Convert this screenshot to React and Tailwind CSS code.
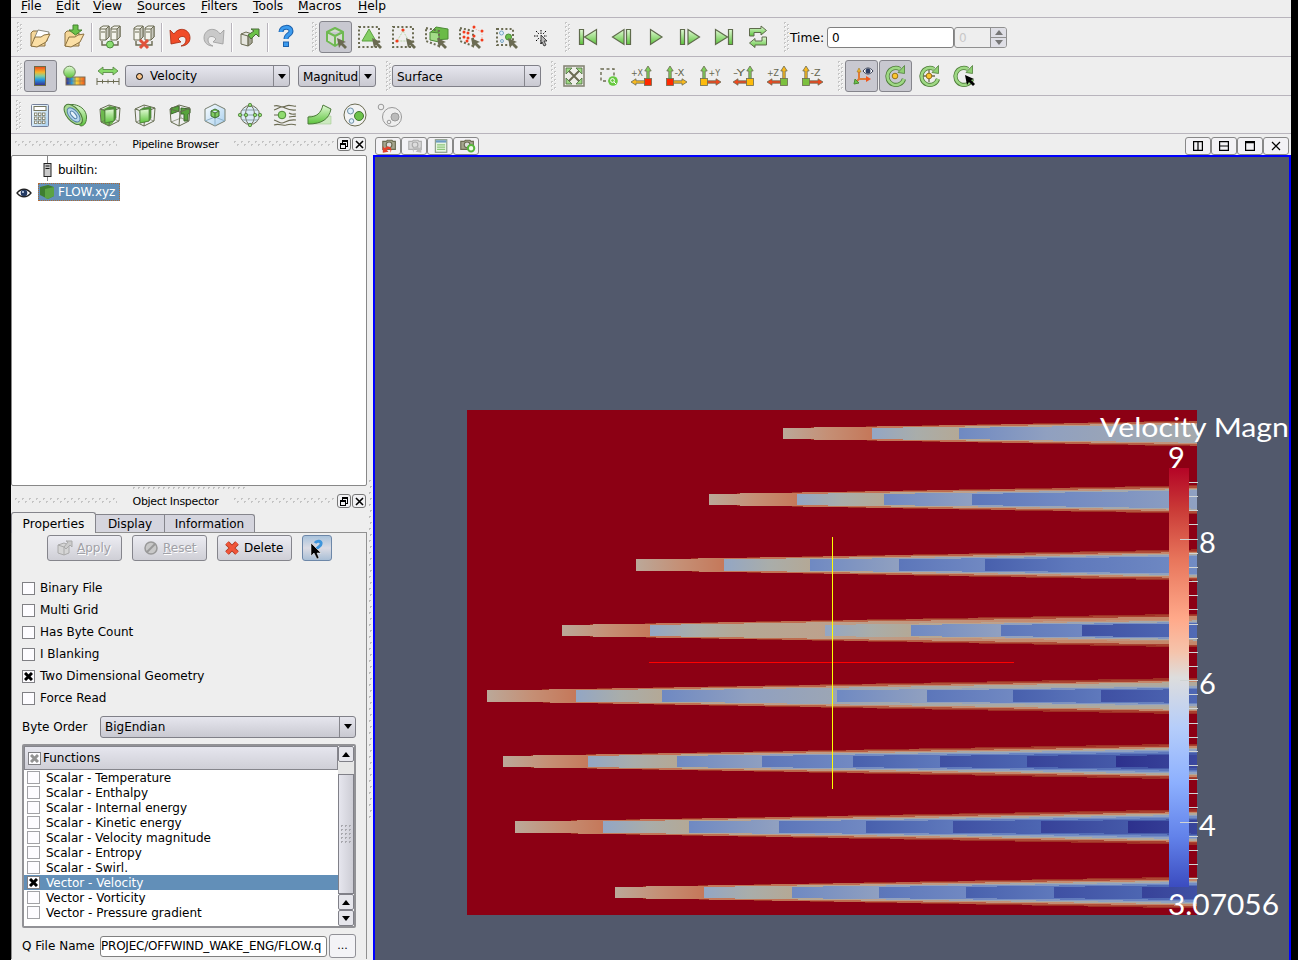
import React from "react";

const O = "#6b6b52";
const G = "#6cc24a";

/* ---------- generic pieces ---------- */

const I = ({ children, s = 30 }) => (
  <svg width={s} height={s} viewBox={`${-s / 2} ${-s / 2} ${s} ${s}`} className="block shrink-0 overflow-visible" fill="none">
    {children}
  </svg>
);

const Cell = ({ children, on, wide }) => (
  <div className={`flex h-8 shrink-0 items-center justify-center ${wide ? "w-[35px]" : "w-[34px]"}`}>
    {on ? (
      <div className="flex h-8 w-[33px] items-center justify-center rounded-[3px] border border-[#85858c] bg-[#c8c8d0]">{children}</div>
    ) : (
      children
    )}
  </div>
);

const Sep = () => <div className="h-[29px] w-[2px] shrink-0 border-l border-[#b8b4bc] bg-white" />;

const Grip = ({ w }) => (
  <div className={`flex shrink-0 justify-end ${w}`}>
    <svg width="6" height="30" shapeRendering="crispEdges">
      {Array.from({ length: 8 }, (_, i) => (
        <g key={i}>
          <path d={`M0 ${i * 4}h2v1h-1v1h-1z`} fill="#c6c6c6" />
          <path d={`M1 ${i * 4 + 1}h1v1h-1z`} fill="#fff" />
          {i < 7 && <path d={`M3 ${i * 4 + 2}h2v1h-1v1h-1z`} fill="#c6c6c6" />}
          {i < 7 && <path d={`M4 ${i * 4 + 3}h1v1h-1z`} fill="#fff" />}
        </g>
      ))}
    </svg>
  </div>
);

const Dots = ({ w }) => (
  <svg width={w} height="6" shapeRendering="crispEdges" className="block shrink-0">
    {Array.from({ length: Math.floor(w / 7) + 1 }, (_, i) => (
      <g key={i} fill="#c4c4c4">
        <path d={`M${i * 7} 0h2v1h-1v1h-1z`} />
        <path d={`M${i * 7 + 3} 3h2v1h-1v1h-1z`} />
      </g>
    ))}
  </svg>
);

const DotRow = ({ w }) => (
  <svg width={w} height="3" shapeRendering="crispEdges" className="block shrink-0">
    {Array.from({ length: Math.floor(w / 5) + 1 }, (_, i) => (
      <path key={i} d={`M${i * 5} 0h2v1h-1v1h-1z`} fill="#c0c0c0" />
    ))}
  </svg>
);

const Arrow = ({ up, c = "#000" }) => (
  <svg width="8" height="5" className="block shrink-0">
    <path d={up ? "M0 5h8l-4-5z" : "M0 0h8l-4 5z"} fill={c} />
  </svg>
);

const Combo = ({ w, children }) => (
  <div className={`flex h-[22px] shrink-0 overflow-hidden rounded-[3px] border border-[#808088] bg-gradient-to-b from-[#e6e6ee] to-[#c9c9d1] ${w}`}>
    <div className="flex min-w-0 flex-1 items-center overflow-hidden whitespace-nowrap pl-1">{children}</div>
    <div className="flex w-4 shrink-0 items-center justify-center border-l border-[#85858c]">
      <Arrow />
    </div>
  </div>
);

/* ---------- toolbar icons ---------- */

const Folder = ({ arrow }) => (
  <I>
    <path d="M-9 9V-4l2-2h5l2 2h5V9z" fill="#f5d79a" stroke="#8b7140" />
    {!arrow && <path d="M-6 2l4-9 11 2-2 9z" fill="#fff" stroke="#8c8c80" />}
    <path d="M-9 9l4-9 6 0 3-2 6-1-4 8-9 5z" fill="#fbdfa5" stroke="#8b7140" />
    {arrow && <path d="M-1-12h5v5h4L1.500-2-5-7h4z" fill={G} stroke="#43822e" />}
  </I>
);

const Servers = ({ bad }) => (
  <I>
    {[-10, 1].map((x) => (
      <g key={x} stroke={O}>
        <path d={`M${x}-9l3-2h6v11l-3 3h-6z`} fill="#f4f4ec" />
        <path d={`M${x + 6} 3v-11l3-3v11z`} fill="#c7c7bc" />
        <path d={`M${x}-8h6M${x + 1}-5h4`} />
      </g>
    ))}
    <path d="M-8 4v4H8V4" stroke={O} strokeWidth="1.400" />
    {bad ? (
      <path d="M-4 3L4 11M4 3l-8 8" stroke="#e0533c" strokeWidth="3" />
    ) : (
      <circle cy="7.500" r="3.500" fill="#8ade72" stroke="#4a8a38" />
    )}
  </I>
);

const Undo = ({ gray }) => (
  <I>
    <g transform={gray ? "scale(-1,1)" : ""}>
      <path
        d="M-10-7l1 14 10-2-3-3c3-4 8-3 8 1 0 3-2 5-5 6 6 0 9-4 9-8C10-8-1-11-6-3z"
        fill={gray ? "#c9c9c9" : "#f04c28"}
        stroke={gray ? "#9a9a9a" : "#a4290f"}
        strokeWidth=".8"
      />
    </g>
  </I>
);

const Export = () => (
  <I>
    <path d="M-9-3l5-2 6 2v9l-4 3-7-2z" fill="#e6e6df" stroke={O} />
    <path d="M-2-1l4-2v9l-4 3z" fill="#a5a596" stroke={O} strokeWidth=".7" />
    <path d="M-9-3l7 2v10" stroke={O} />
    <path d="M-2-2l6-4-3-2h8v8l-3-3-5 5z" fill={G} stroke="#4a6b38" />
  </I>
);

const Question = () => (
  <I>
    <path d="M-5-5c0-6 10-6 10-1 0 4-5 3-5 8" stroke="#1d62ad" strokeWidth="5" />
    <path d="M-5-5c0-6 10-6 10-1 0 4-5 3-5 8" stroke="#3c9bee" strokeWidth="3" />
    <rect x="-2.500" y="5" width="5" height="4.500" fill="#3c9bee" stroke="#1d62ad" />
  </I>
);

const Ptr = ({ x = 0, y = 0, c = O }) => (
  <path transform={`translate(${x} ${y})`} d="M0 0l9 4-3 1 4 4-2 2-4-4-2 3z" fill={c} />
);
const DashBox = ({ s = 10 }) => <rect x={-s} y={-s} width={s * 2} height={s * 2} stroke={O} strokeWidth="2" strokeDasharray="2 2.200" />;

const SelCube = () => (
  <I>
    <path d="M-8-5l8-4 8 4v9l-8 5-8-5zM-8-5l8 4 8-4M0-1v10" fill="#d3dccf" stroke="#6fb952" strokeWidth="2" strokeLinejoin="round" />
    <Ptr x={2} y={1} />
  </I>
);
const SelTri = ({ pts }) => (
  <I>
    <DashBox />
    {pts ? (
      <>
        <path d="M0-6L-6 4H6z" stroke="#b9d6a8" strokeDasharray="2 1" />
        <g fill="#f23c1c">
          <circle cx="0" cy="-7" r="1.600" />
          <circle cx="-6" cy="4" r="1.600" />
          <circle cx="6" cy="4" r="1.600" />
        </g>
      </>
    ) : (
      <path d="M0-8L-7 4H7z" fill="#85cf66" stroke="#5ba03f" />
    )}
    <Ptr x={3} y={1} />
  </I>
);
const SelFrus = () => (
  <I>
    <path d="M-6-5l5-5 12 2 0 10-13 1z" fill="#6abb47" stroke="#4c8a35" />
    <path d="M-7-5l9 1v9l-9-2z" fill="#a4dc88" stroke="#4c8a35" />
    <path d="M-11-9L2-6V9l-13-5z" stroke={O} strokeWidth="2" strokeDasharray="2 2" />
    <Ptr x={0} y={1} />
  </I>
);
const SelFrusP = () => (
  <I>
    <path d="M-11-9L2-6V9l-13-5z" stroke={O} strokeWidth="2" strokeDasharray="2 2" />
    <path d="M2-9l9 4v9" stroke="#f7a090" strokeDasharray="1 2" />
    <g fill="#f23c1c">
      {[[-7, -5], [-3, -4], [-7, 0], [-3, 1], [3, -10], [11, -6], [11, 3], [3, -1], [-4, 4]].map(([x, y], i) => (
        <circle key={i} cx={x} cy={y} r="1.500" />
      ))}
    </g>
    <Ptr x={0} y={1} />
  </I>
);
const SelBlock = () => (
  <I>
    <DashBox s={8} />
    <circle cx="-3.500" cy="-4" r="2" fill="#dff0fb" stroke="#7aa6c4" />
    <circle cx="-3" cy="4" r="1.500" fill="#dff0fb" stroke="#7aa6c4" />
    <circle cx="3.500" cy="0" r="3" fill={G} stroke="#4c8a35" />
    <Ptr x={3} y={1} />
  </I>
);
const Magic = () => (
  <I>
    <g transform="translate(2 0)">
      <path d="M0-7v4M0 3v4M-7-1h4M3-1h3M-5-6l3 3M5-6L2-3M-5 4l3-3" stroke="#000" strokeDasharray="1.500 1" />
      <path d="M0-2l6 6-3 0 2 4-2 1-2-4-1 2z" fill="#b9b9b9" stroke="#222" strokeWidth=".8" />
    </g>
  </I>
);

const Grad = () => (
  <svg width="0" height="0" className="absolute">
    <defs>
      <linearGradient id="gr" x2="0" y2="1">
        <stop stopColor="#e2fad6" />
        <stop offset="1" stopColor="#5cc33b" />
      </linearGradient>
      <linearGradient id="jet" x2="0" y2="1">
        <stop stopColor="#e8461c" />
        <stop offset=".3" stopColor="#f7b52a" />
        <stop offset=".5" stopColor="#7fd0a0" />
        <stop offset=".7" stopColor="#2596e0" />
        <stop offset="1" stopColor="#3b2a86" />
      </linearGradient>
      <linearGradient id="jeth">
        <stop stopColor="#3b2a86" />
        <stop offset=".3" stopColor="#2596e0" />
        <stop offset=".55" stopColor="#f7d23a" />
        <stop offset="1" stopColor="#f0561c" />
      </linearGradient>
      <linearGradient id="bl" x2="1" y2="1">
        <stop stopColor="#fafdff" />
        <stop offset="1" stopColor="#a9d0ee" />
      </linearGradient>
    </defs>
  </svg>
);

const P = ({ d }) => (
  <I>
    <path d={d} fill="url(#gr)" stroke="#5f6b4c" strokeWidth="1.200" />
  </I>
);
const Loop = () => (
  <I>
    <path d="M-8.500-1v-7.500H3v-2.500l5.500 4.500L3-2v-2.500h-7V-1z" fill="url(#gr)" stroke="#5f6b4c" />
    <path d="M8.500 0v8H-3v2.500L-8.500 6-3 1.500V4h7V0z" fill="url(#gr)" stroke="#5f6b4c" />
  </I>
);

const ColorMap = () => (
  <I>
    <rect x="-5.500" y="-9.500" width="11" height="19" fill="url(#jet)" stroke="#6c6c48" />
  </I>
);
const ColorEdit = () => (
  <I>
    <rect x="-8" y="1" width="19" height="8" fill="url(#jeth)" stroke="#7d7055" />
    <path d="M-4 1v8M1 1v8M6 1v8M-8 5H11" stroke="#7d7055" strokeWidth=".5" />
    <circle cx="-4.500" cy="-4" r="5.800" fill="url(#gr)" stroke="#6d8a5c" />
  </I>
);
const Rescale = () => (
  <I>
    <path d="M-10-5l5-4v2.500H5V-9l5 4-5 4v-2.500H-5V-1z" fill="#86d968" stroke="#5b8a48" strokeWidth=".9" />
    <path d="M-11 2v7M11 2v7M-11 5.500H11M-5.500 3.500v4M0 3.500v4M5.500 3.500v4" stroke={O} />
  </I>
);
const Fit = () => (
  <I>
    <rect x="-10" y="-10" width="20" height="20" fill="#eeeee9" stroke="#858575" strokeWidth="1.600" />
    <path d="M-7-7L7 7M7-7L-7 7" stroke={O} strokeWidth="2" />
    <path d="M-8-8h6l-6 6zM8-8v6l-6-6zM-8 8V2l6 6zM8 8H2l6-6z" fill="#9edb84" stroke="#4b6b3c" strokeWidth=".8" />
  </I>
);
const ZoomBox = () => (
  <I>
    <rect x="-7" y="-7" width="13" height="12" stroke={O} strokeWidth="1.400" strokeDasharray="3 2.500" />
    <circle cx="5" cy="5" r="4.800" fill="#66c93f" />
    <circle cx="4.500" cy="4.500" r="1.900" stroke="#fff" />
    <path d="M6 6l2 2" stroke="#fff" />
  </I>
);

const Axis = ({ t, left, up, side, box }) => {
  const f = left ? -1 : 1;
  return (
    <I>
      <g transform={`translate(${left ? 6 : -6} 6) scale(${f} 1)`} stroke={O} strokeWidth=".8">
        <path d="M-1.200 0v-11h-2L0-16l3.200 5h-2V0z" fill={up} />
        <path d="M0-1.200h12v-2L17 0l-5 3.200v-2H0z" fill={side} />
        <rect x="-3.500" y="-3.500" width="7" height="7" fill={box} />
      </g>
      <text x={left ? -11 : -1.5} y="-.5" fontSize="9" fontFamily="DejaVu Sans, sans-serif" fill="#66664f" textLength={left ? 12 : t[0] === "+" ? 11.5 : 10} lengthAdjust="spacingAndGlyphs">
        {t}
      </text>
    </I>
  );
};

const AxesEye = () => (
  <I>
    <path d="M-2 3V-5M-2 3H7M-2 3l-3 3" stroke="#df7a35" strokeWidth="2" />
    <path d="M-4-4l2-4 2 4z" fill="#f7b52a" stroke="#a07a20" strokeWidth=".6" />
    <path d="M5 0l5 3-5 3z" fill="#f0561c" />
    <path d="M-7 8l1-5 4 4z" fill={G} stroke="#4c8a35" />
    <path d="M2-5c3-4 7-4 10 0-3 4-7 4-10 0z" fill="#fff" stroke="#333b50" />
    <circle cx="7" cy="-5" r="2.500" fill="#2c3c60" />
  </I>
);
const Rot = ({ mid, cur }) => (
  <I>
    <path d="M5-7A8.500 8.500 0 1 0 9 3" stroke="#4f7d3a" strokeWidth="4.200" />
    <path d="M5-7A8.500 8.500 0 1 0 9 3" stroke="#9ed884" strokeWidth="2.600" />
    <path d="M3-3.500L9.500-10.500V-2.500z" fill="#8fd072" stroke="#4f7d3a" strokeWidth=".8" />
    {mid === 2 && <path d="M0-6V6M-6 0H6" stroke={O} strokeWidth="1.300" />}
    {mid && <circle r="2.800" fill="#fbc52f" stroke="#96731a" />}
    {cur && <Ptr x={2} y={-1} c="#000" />}
  </I>
);

const Calc = () => (
  <I>
    <rect x="-8.500" y="-10.500" width="17" height="22" rx="1" fill="url(#bl)" stroke="#74809a" />
    <rect x="-6" y="-8.500" width="12" height="4" fill="#fff" stroke="#77775f" />
    {[-5, -1, 3].map((x) =>
      [-2, 2, 6].map((y) => <rect key={`${x}${y}`} x={x - 0.5} y={y} width="2.500" height="2.500" fill="#fff" stroke="#77775f" strokeWidth=".8" />)
    )}
  </I>
);
const Contour = () => (
  <I>
    <path d="M-10-8C-7-13 11-11 11.500 2c0 7-3 9-6 9z" fill="url(#gr)" stroke="#4c7a3a" />
    <ellipse cx="-1.500" cy="1" transform="rotate(50)" rx="12" ry="6.500" fill="#a9d993" stroke="#4c7a3a" />
    <ellipse cx="-1" cy="1" transform="rotate(50)" rx="8.500" ry="4.500" fill="#b5d6ee" stroke="#5480a8" />
    <ellipse cx="-1" cy="1" transform="rotate(50)" rx="4.500" ry="2" fill="#e6f3fb" stroke="#5480a8" />
  </I>
);
const Cube = ({ v }) => (
  <I>
    {v === 0 && <path d="M-9-5L0-9l5 1-2 16-4 3-8-4z" fill="#6db94e" />}
    {v === 2 && <path d="M-9-7l8-2v5l-8 3zM1-7l9 1v4l-2 1v7H4V-1H1z" fill="#57a33c" stroke="#3d6b2c" />}
    <path d="M-10-6L-1-10 10-7 9 6-1 11-9 7zM-10-6L0-3 10-7M0-3l-1 14" stroke="#646c50" />
    <path d="M-9 7L1 3 9 6M1 3L-1-10" stroke="#646c50" strokeWidth=".6" />
    {v < 2 && <path d="M-5-5l3-2 8-1v11l-2 3-9 2z" fill="#4f9a38" stroke="#4c7a3a" strokeWidth=".7" />}
    {v < 2 && <path d="M-5-5l9-1v12l-9 2z" fill="url(#gr)" stroke="#4c7a3a" strokeWidth=".7" />}
  </I>
);
const Subset = () => (
  <I>
    <path d="M-10-6L0-11 10-6V6L0 11-10 6z" fill="url(#bl)" stroke="#777f70" />
    <path d="M-10 6L0 2 10 6M0 2v9" stroke="#8fb3cc" />
    <path d="M-4-4l4-2 4 2v5l-4 2-4-2zM-4-4l4 2 4-2M0-2v5" fill="#7fcc60" stroke="#3f6f30" />
  </I>
);
const Glyph = () => (
  <I>
    <circle r="9.500" fill="#dcecf8" stroke={O} />
    <ellipse rx="4.500" ry="9.500" stroke={O} />
    <path d="M-9.500 0H9.500M-8-5H8M-8 5H8" stroke="#8fa0a8" />
    {[[0, -10], [0, 10], [-10, 0], [10, 0], [-4, 0], [5, 0]].map(([x, y], i) => (
      <circle key={i} cx={x} cy={y} r="1.700" fill="#8fdb70" stroke="#4c7a3a" strokeWidth=".8" />
    ))}
  </I>
);
const Stream = () => (
  <I>
    <path d="M-11-9c5-2 7 3 12 0 4-2 7 1 10 0M-11-5c4-1 5-3 8-3s5 4 14 3M-11 5c4 1 5 3 8 3s5-4 14-3M-11 10c5-2 7 1 12 0 4-1 7-1 10 0M-11 0h5M4-2c3 2 4 1 7 1M4 2c3-1 4 0 7-1" stroke={O} strokeWidth="1.100" />
    <circle cx="-3" cy="0" r="3.800" fill="#8fdb70" stroke="#4c8a35" />
  </I>
);
const Warp = () => (
  <I>
    <path d="M-11 1H11V9H-11z" fill="#cdeac0" stroke="#a5cb94" strokeWidth=".6" />
    <path d="M-12 2C-3 2 1-2 3-10l8 4C9 4 2 9-12 9z" fill="url(#gr)" stroke="#4c7a3a" />
  </I>
);
const Group = () => (
  <I>
    <circle r="11" stroke={O} fill="#f3f3f3" />
    <circle cx="-4.500" cy="-4" r="3" fill="#dff0fb" stroke="#6f8fa6" />
    <circle cx="-3.500" cy="6" r="2.300" fill="#dff0fb" stroke="#6f8fa6" />
    <circle cx="4" cy="1" r="4.500" fill={G} stroke="#43762f" />
  </I>
);
const Extract = () => (
  <I>
    <circle cx="2" cy="2" r="9.500" stroke="#999" />
    <circle cx="-9" cy="-8" r="2.800" stroke="#999" fill="#eee" />
    <circle cx="5" cy="2" r="4" fill="#bbb" stroke="#999" />
    <circle cx="-1" cy="7" r="1.800" stroke="#999" />
  </I>
);

/* ---------- left dock ---------- */

const DockHeader = ({ title }) => (
  <div className="flex h-5 items-center pl-1">
    <Dots w={102} />
    <div className="w-[117px] whitespace-nowrap pt-px text-center text-[11px] tracking-[-0.300px]">{title}</div>
    <Dots w={101} />
    <div className="ml-0.5 flex h-[14px] w-[14px] items-center justify-center rounded-[3px] border border-[#777] bg-[#f2f2f4]">
      <svg width="10" height="10" fill="none" stroke="#000" shapeRendering="crispEdges">
        <path d="M3 1h6M3 2.500h6M3.500 1v3M8.500 1v6H6M1 4h5.500M1 5.500h5.500M1.500 4v5.500h5V4" />
      </svg>
    </div>
    <div className="ml-px flex h-[14px] w-[14px] items-center justify-center rounded-[3px] border border-[#777] bg-[#f2f2f4]">
      <svg width="9" height="9" stroke="#000" strokeWidth="1.600">
        <path d="M1 1l7 7M8 1L1 8" />
      </svg>
    </div>
  </div>
);

const Check = ({ on, gray, light }) => (
  <div className={`flex h-[13px] w-[13px] shrink-0 items-center justify-center border bg-[#fdfcff] ${light ? "border-[#a2a2a6]" : "border-[#808084]"}`}>
    {on ? (
      <svg width="9" height="9" stroke={gray ? "#929292" : "#000"} strokeWidth="3">
        <path d="M1 1l7 7M8 1L1 8" />
      </svg>
    ) : null}
  </div>
);

const Btn = ({ children, w = "w-[75px]", cls = "" }) => (
  <div className={`flex h-[26px] shrink-0 items-center rounded-[3px] border border-[#85858c] bg-gradient-to-b from-[#ececf2] to-[#cfcfd6] ${w} ${cls}`}>{children}</div>
);

const checks = [
  ["Binary File", false],
  ["Multi Grid", false],
  ["Has Byte Count", false],
  ["I Blanking", false],
  ["Two Dimensional Geometry", true],
  ["Force Read", false],
];
const funcs = [
  "Scalar - Temperature",
  "Scalar - Enthalpy",
  "Scalar - Internal energy",
  "Scalar - Kinetic energy",
  "Scalar - Velocity magnitude",
  "Scalar - Entropy",
  "Scalar - Swirl.",
  "Vector - Velocity",
  "Vector - Vorticity",
  "Vector - Pressure gradient",
];

const ScrollBtn = ({ up }) => (
  <div className="flex h-4 items-center justify-center rounded-[2px] border border-[#808088] bg-[#e6e6ec]">
    <Arrow up={up} />
  </div>
);

const Inspector = () => (
  <div className="flex h-[427px] w-[356px] flex-col border-x border-t border-[#909090] pl-[10px] pt-[2px]">
    <div className="flex pl-[25px]">
      <Btn cls="text-[#a0a0a6]">
        <div className="ml-1 w-[25px]">
          <I s={24}>
            <path d="M-6-3v8l6 2 5-2v-8l-5-2z" fill="#d5d5d5" stroke="#aaa" />
            <path d="M-6-3l6 2 5-2M0-1v8" stroke="#aaa" />
            <path d="M0-1l4-5-2-1h6v6l-2-2-4 4z" fill="#ccc" stroke="#aaa" />
          </I>
        </div>
        <span className="[text-shadow:1px_1px_#fff]"><u>A</u>pply</span>
      </Btn>
      <Btn cls="ml-[10px] text-[#a0a0a6]">
        <div className="ml-1.5 w-[24px]">
          <I s={24}>
            <circle r="6" fill="#c8c8c8" stroke="#999" strokeWidth="1.500" />
            <path d="M-4 4L4-4" stroke="#999" strokeWidth="2" />
          </I>
        </div>
        <span className="[text-shadow:1px_1px_#fff]"><u>R</u>eset</span>
      </Btn>
      <Btn cls="ml-[10px]">
        <div className="ml-0.5 w-[24px]">
          <I s={24}>
            <path d="M-5-5L5 5M5-5L-5 5" stroke="#a8341c" strokeWidth="5" />
            <path d="M-5-5L5 5M5-5L-5 5" stroke="#f0553a" strokeWidth="3.500" />
          </I>
        </div>
        <span>Delete</span>
      </Btn>
      <Btn w="w-[30px]" cls="ml-[10px] justify-center border-[#6d87a8]! from-[#a9c3dc]! via-[#dcdce4]! to-[#a9bfd6]!">
        <I s={24}>
          <path d="M-2-5c2-3 7-2 6 1 0 3-4 3-4 5" stroke="#3f96dc" strokeWidth="3" />
          <path d="M-6-5v13l3-3 3 6 2-1-2-5h4z" fill="#000" stroke="#fff" strokeWidth=".5" />
        </I>
      </Btn>
    </div>
    <div className="mt-4">
      {checks.map(([t, on]) => (
        <div key={t} className="flex h-[22px] items-center gap-[5px]">
          <Check on={on} />
          <span>{t}</span>
        </div>
      ))}
    </div>
    <div className="mt-[7px] flex h-[21px] items-center">
      <div className="w-[78px]">Byte Order</div>
      <Combo w="w-[256px]">BigEndian</Combo>
    </div>
    <div className="mt-[7px] flex h-[184px] w-[334px] rounded-[2px] border-2 border-[#929296] bg-white">
      <div className="w-[314px]">
        <div className="flex h-6 items-center border border-[#85858c] bg-gradient-to-b from-[#e6e6ee] to-[#cfcfd7] pl-[3px]">
          <Check on gray />
          <span className="ml-[2px]">Functions</span>
        </div>
        {funcs.map((t, i) => (
          <div key={t} className={`flex h-[15px] items-center gap-[6px] pl-[3px] ${i === 7 ? "bg-[#628fb8] text-white" : ""}`}>
            <Check on={i === 7} light={i !== 7} />
            <span>{t}</span>
          </div>
        ))}
      </div>
      <div className="flex w-4 flex-col">
        <ScrollBtn up />
        <div className="h-3 bg-[#e6e6e6]" />
        <div className="flex flex-1 items-center justify-center border border-[#808088] bg-gradient-to-r from-[#e6e6ee] to-[#cdcdd5]">
          <svg width="11" height="19" shapeRendering="crispEdges">
            {[0, 4, 8].map((x) => [0, 4, 8, 12, 16].map((y) => <path key={`${x}-${y}`} d={`M${x} ${y}h2v1h-1v1h-1z`} fill="#a8a8ae" />))}
          </svg>
        </div>
        <ScrollBtn up />
        <ScrollBtn />
      </div>
    </div>
    <div className="mt-[6px] flex h-6 items-center">
      <div className="w-[78px]">Q File Name</div>
      <div className="flex h-[21px] w-[227px] items-center overflow-hidden whitespace-nowrap rounded-[3px] border border-[#808080] bg-white tracking-[-0.220px]">
        PROJEC/OFFWIND_WAKE_ENG/FLOW.q
      </div>
      <div className="ml-0.5 flex h-6 w-[27px] items-center justify-center rounded-[3px] border border-[#909096] bg-[#f3f3f6] text-[11px]">...</div>
    </div>
  </div>
);

/* ---------- render view ---------- */

const XE = 1197;
const ramps = {
  1: [[0, "#bba899"], [45, "#c58f75"], [88, "#c5785a"], [250, "#bd6a4d"], [600, "#a9402f"]],
  2: [[0, "#93a6c4"], [45, "#a9adaa"], [88, "#b4a895"], [175, "#bda18c"], [420, "#c5876a"]],
  3: [[0, "#6f89c2"], [88, "#90a0c0"], [220, "#a3a9ae"], [420, "#b1a99b"]],
  4: [[0, "#5c76ba"], [88, "#7189c2"], [230, "#91a2c1"]],
  5: [[0, "#4860ad"], [88, "#5f79bc"], [220, "#738dc4"]],
  6: [[0, "#3f50a3"], [88, "#4d66b2"], [200, "#5e78bc"]],
  7: [[0, "#374299"], [90, "#455aa9"]],
  8: [[0, "#2d318d"], [90, "#3c4ba0"]],
};
const wakes = [
  [433.5, [[783, 1], [872, 2], [959, 3]]],
  [499.5, [[709, 1], [797, 2], [884, 3], [972, 4]]],
  [565, [[636, 1], [724, 2], [810, 3], [899, 4], [985, 5]]],
  [630.5, [[562, 1], [650, 2], [825, 2], [911, 3], [1001, 4], [1082, 6]]],
  [696, [[487, 1], [576, 2], [662, 3], [837, 3], [927, 4], [1013, 5], [1101, 6]]],
  [761.5, [[503, 1], [588, 2], [677, 3], [762, 4], [853, 5], [940, 6], [1027, 7], [1116, 8]]],
  [827, [[515, 1], [603, 2], [689, 3], [779, 4], [866, 5], [953, 6], [1041, 7], [1128, 8]]],
  [892.5, [[615, 1], [704, 2], [792, 3], [879, 4], [966, 5], [1054, 6], [1142, 7]]],
];
const cone = (x, y, k) => {
  const h = 5.5 + (XE - x) * k;
  return `${x},${y - 5.5} ${XE},${y - h} ${XE},${y + h} ${x},${y + 5.5}`;
};

const RenderView = () => (
  <svg width="914" height="803" viewBox="375 157 914 803" className="block bg-[#52596c]" fontFamily="Lato, sans-serif">
    <defs>
      {Object.entries(ramps).map(([l, st]) => (
        <React.Fragment key={l}>
          {wakes.map(([y, segs], r) =>
            segs.filter((s) => s[1] === +l).map(([x]) => (
              <linearGradient key={`${r}-${x}`} id={`w${r}-${x}`} gradientUnits="userSpaceOnUse" x1={x} x2={x + 600} y1="0" y2="0">
                {st.map(([d, c]) => (
                  <stop key={d} offset={d / 600} stopColor={c} />
                ))}
              </linearGradient>
            ))
          )}
        </React.Fragment>
      ))}
      <linearGradient id="bar" x2="0" y2="1">
        <stop stopColor="#b40426" />
        <stop offset=".1" stopColor="#ca3b37" />
        <stop offset=".22" stopColor="#e8765c" />
        <stop offset=".36" stopColor="#ffa98a" />
        <stop offset=".44" stopColor="#f5c4ac" />
        <stop offset=".5" stopColor="#dddddd" />
        <stop offset=".62" stopColor="#b5cdfa" />
        <stop offset=".75" stopColor="#8db0fe" />
        <stop offset=".88" stopColor="#6282ea" />
        <stop offset="1" stopColor="#3b4cc0" />
      </linearGradient>
    </defs>
    <rect x="467" y="410" width="730" height="505" fill="#8c0014" />
    <g shapeRendering="crispEdges">
      {wakes.map(([y, segs], r) => (
        <g key={r}>
          <polygon points={cone(segs[0][0], y, 0.018)} fill="#a03024" />
          {segs.map(([x]) => (
            <polygon key={x} points={cone(x, y, 0.016)} fill={`url(#w${r}-${x})`} />
          ))}
        </g>
      ))}
      <rect x="649" y="662" width="365" height="1" fill="#ff0000" />
      <rect x="832" y="537" width="1" height="252" fill="#ffff00" />
      <rect x="1169" y="468" width="20" height="419" fill="url(#bar)" />
      {Array.from({ length: 29 }, (_, i) => {
        const major = i % 10 === 4;
        return <rect key={i} x={major ? 1180 : 1189} y={Math.round(482 + i * 14.15)} width={major ? 18 : 9} height="1" fill="#d0d4d4" />;
      })}
    </g>
    <g fill="#fff" fontSize="29">
      <text x="1100" y="436.500" fontSize="27.500" textLength="189" lengthAdjust="spacingAndGlyphs">Velocity Magn</text>
      <text x="1168" y="468">9</text>
      <text x="1199" y="553">8</text>
      <text x="1199" y="694">6</text>
      <text x="1199" y="836">4</text>
      <text x="1168" y="915" textLength="111" lengthAdjust="spacingAndGlyphs">3.07056</text>
    </g>
  </svg>
);

const MiniCam = ({ c, k }) => (
  <svg width="21" height="16" viewBox="0 0 18 14" fill="none">
    {k === "list" ? (
      <>
        <rect x="4.500" y="1.500" width="10" height="11" fill="#e6f5e0" stroke="#8a9a88" />
        <path d="M5 3h9" stroke="#6f9cc4" strokeWidth="2" />
        <path d="M6 6h7M6 8h7M6 10h7" stroke="#8cc57a" />
      </>
    ) : (
      <>
        <path d="M4 3h3l1-1h4l1 1h2v7H4z" fill={c === "gray" ? "#d8d8d8" : "#a5a58e"} stroke={c === "gray" ? "#b0b0b0" : "#6b6b52"} />
        <circle cx="9.500" cy="6" r="2.500" fill="#ddd" stroke={c === "gray" ? "#aaa" : "#6b6b52"} />
        {k === "zoom" ? <circle cx="13" cy="9" r="2.800" fill="#f0fae8" stroke="#57b83a" strokeWidth="1.800" /> : null}
        {k === "back" ? <path d="M4 7v6l5-1-1.500-1.500c2-2 4-.5 3 2.500 3-4-1-8-5-4z" fill="#e5402a" /> : null}
        {k === "fwd" ? <path d="M15 7v6l-5-1 1.500-1.500c-2-2-4-.5-3 2.500-3-4 1-8 5-4z" fill="#bbb" /> : null}
      </>
    )}
  </svg>
);
const TabBtn = ({ children }) => (
  <div className="flex h-[18px] w-[26px] items-center justify-center rounded-[3px] border border-[#888] bg-[#f3f2f5]">{children}</div>
);
const WinIcon = ({ d }) => (
  <svg width="10" height="10" fill="none" stroke="#000" strokeWidth="1.200">
    <path d={d} />
  </svg>
);

const menus = [
  ["File", "w-[35px]"],
  ["Edit", "w-[37px]"],
  ["View", "w-[44px]"],
  ["Sources", "w-[64px]"],
  ["Filters", "w-[52px]"],
  ["Tools", "w-[45px]"],
  ["Macros", "w-[60px]"],
  ["Help", "w-[40px]"],
];

const GREEN = "#7fce5a";
const YEL = "#f9b91f";
const RED = "#f0481e";

export default function App() {
  return (
    <div className="h-[960px] w-[1298px] overflow-hidden bg-black pl-[11px] font-['DejaVu_Sans',sans-serif] text-[12px] leading-[14px] text-black">
      <Grad />
      <div className="flex h-[960px] w-[1280px] flex-col bg-[#eeeeee]">
        <div className="flex h-[18px] shrink-0 items-start border-b border-[#b8b4bc] pl-[10px] text-[12.250px]">
          {menus.map(([m, w]) => (
            <div key={m} className={`-mt-px ${w}`}>
              <span className="underline underline-offset-2">{m[0]}</span>
              {m.slice(1)}
            </div>
          ))}
        </div>

        <div className="flex h-[39px] shrink-0 items-center border-b border-[#b8b4bc]">
          <Grip w="w-[12px]" />
          <Cell><Folder /></Cell>
          <Cell><Folder arrow /></Cell>
          <Sep />
          <Cell><Servers /></Cell>
          <Cell><Servers bad /></Cell>
          <Sep />
          <Cell><Undo /></Cell>
          <Cell><Undo gray /></Cell>
          <Sep />
          <Cell><Export /></Cell>
          <Sep />
          <Cell><Question /></Cell>
          <Grip w="w-[15px]" />
          <Cell on><SelCube /></Cell>
          <Cell><SelTri /></Cell>
          <Cell><SelTri pts /></Cell>
          <Cell><SelFrus /></Cell>
          <Cell><SelFrusP /></Cell>
          <Cell><SelBlock /></Cell>
          <Cell><Magic /></Cell>
          <Grip w="w-[15px]" />
          <Cell><P d="M-8.500-7.500h4v15h-4zM8.500-7.500v15L-3.500 0z" /></Cell>
          <Cell><P d="M-9.500 0L2-7.500v15zM4.500-7.500h4v15h-4z" /></Cell>
          <Cell><P d="M-5.500-7.500L6 0-5.500 7.500z" /></Cell>
          <Cell><P d="M-9.500-7.500h4v15h-4zM-2-7.500L9.500 0-2 7.500z" /></Cell>
          <Cell><P d="M-8.500-7.500L3.500 0l-12 7.500zM4.500-7.500h4v15h-4z" /></Cell>
          <Cell><Loop /></Cell>
          <Grip w="w-[15px]" />
          <div className="w-[37px] pt-px text-[12.250px]">Time:</div>
          <div className="flex h-[21px] w-[127px] items-center rounded-[3px] border border-[#808080] bg-white pl-1 pt-px">0</div>
          <div className="flex h-[21px] w-[53px] overflow-hidden rounded-[3px] border border-[#909090]">
            <div className="flex flex-1 items-center pl-1 pt-px text-[#c8c8c8]">0</div>
            <div className="flex w-4 flex-col border-l border-[#909090] bg-[#dfdfe6]">
              <div className="flex flex-1 items-center justify-center border-b border-[#909090]"><Arrow up c="#777" /></div>
              <div className="flex flex-1 items-center justify-center"><Arrow c="#777" /></div>
            </div>
          </div>
        </div>

        <div className="flex h-[39px] shrink-0 items-center border-b border-[#b8b4bc]">
          <Grip w="w-[12px]" />
          <Cell on><ColorMap /></Cell>
          <Cell><ColorEdit /></Cell>
          <Cell><Rescale /></Cell>
          <Combo w="w-[165px]">
            <div className="ml-[6px] mr-[7px] h-[7px] w-[7px] rounded-full border border-black bg-[#f8c48a]" />
            Velocity
          </Combo>
          <div className="w-2 shrink-0" />
          <Combo w="w-[78px]"><span className="pt-px tracking-[-0.150px]">Magnitud</span></Combo>
          <Grip w="w-[16px]" />
          <Combo w="w-[149px]"><span className="pt-px">Surface</span></Combo>
          <Grip w="w-[16px]" />
          <Cell><Fit /></Cell>
          <Cell><ZoomBox /></Cell>
          <Cell><Axis t="+X" left up={GREEN} side={YEL} box="#ff2a00" /></Cell>
          <Cell><Axis t="-X" up={GREEN} side={YEL} box="#ff2a00" /></Cell>
          <Cell><Axis t="+Y" up={GREEN} side={RED} box="#fdbb0c" /></Cell>
          <Cell><Axis t="-Y" left up={GREEN} side={RED} box="#fdbb0c" /></Cell>
          <Cell><Axis t="+Z" left up={YEL} side={RED} box="#7cc13e" /></Cell>
          <Cell><Axis t="-Z" up={YEL} side={RED} box="#7cc13e" /></Cell>
          <Grip w="w-[15px]" />
          <Cell on><AxesEye /></Cell>
          <Cell on><Rot mid={1} /></Cell>
          <Cell><Rot mid={2} /></Cell>
          <Cell><Rot cur /></Cell>
        </div>

        <div className="flex h-[38px] shrink-0 items-center border-b border-[#b8b4bc]">
          <Grip w="w-[11px]" />
          <Cell wide><Calc /></Cell>
          <Cell wide><Contour /></Cell>
          <Cell wide><Cube v={0} /></Cell>
          <Cell wide><Cube v={1} /></Cell>
          <Cell wide><Cube v={2} /></Cell>
          <Cell wide><Subset /></Cell>
          <Cell wide><Glyph /></Cell>
          <Cell wide><Stream /></Cell>
          <Cell wide><Warp /></Cell>
          <Cell wide><Group /></Cell>
          <Cell wide><Extract /></Cell>
        </div>

        <div className="flex min-h-0 flex-1">
          <div className="flex w-[356px] shrink-0 flex-col">
            <DockHeader title="Pipeline Browser" />
            <div className="mt-px h-[331px] rounded-[2px] border border-[#888] bg-white">
              <div className="flex h-[25px] items-center pl-[29px]">
                <svg width="12" height="25" className="block">
                  <path d="M6.500 0v7M6.500 21v4" stroke="#888" />
                  <rect x="3" y="7.500" width="7" height="13" fill="#c9c9c9" stroke="#222" />
                  <path d="M4.500 10h4M4.500 12.500h4" stroke="#111" />
                </svg>
                <span className="ml-[5px] mt-[2px] tracking-[-0.250px]">builtin:</span>
              </div>
              <div className="flex h-[22px] items-center">
                <svg width="26" height="18" className="mt-0.5 block">
                  <path d="M5 9c4-5 10-5 14 0-4 5-10 5-14 0z" fill="#fff" stroke="#222" strokeWidth="1.300" />
                  <circle cx="12" cy="9" r="3.300" fill="#243a63" />
                  <circle cx="11" cy="8" r="1" fill="#cfe0f5" />
                </svg>
                <div className="flex h-[18px] w-[82px] items-center border border-dotted border-[#b06a35] bg-[#628fb8] text-white">
                  <svg width="18" height="16" className="block">
                    <path d="M1 3l8-2 6 2v9l-6 3-8-4z" fill="#3f7e31" />
                    <path d="M6 5l9-2v9l-6 3-3-1z" fill="#5ba344" />
                  </svg>
                  <span className="ml-px">FLOW.xyz</span>
                </div>
              </div>
            </div>
            <div className="flex h-[5px] items-center justify-center"><DotRow w={112} /></div>
            <DockHeader title="Object Inspector" />
            <div className="flex h-[21px] items-end">
              <div className="relative top-px flex h-[21px] w-[85px] items-center justify-center rounded-t-[3px] border border-b-0 border-[#85858c] bg-[#eeeeee] pt-px text-[12.250px]">Properties</div>
              <div className="flex h-[18px] w-[69px] items-center justify-center border border-b-0 border-l-0 border-[#85858c] bg-[#d5d5de] pt-px">Display</div>
              <div className="flex h-[18px] w-[90px] items-center justify-center rounded-tr-[3px] border border-b-0 border-l-0 border-[#85858c] bg-[#d5d5de] pt-px">Information</div>
            </div>
            <Inspector />
          </div>

          <div className="flex w-[6px] shrink-0 justify-center pt-[346px]">
            <svg width="3" height="344" shapeRendering="crispEdges">
              {Array.from({ length: 57 }, (_, i) => (
                <path key={i} d={`M${i % 2} ${i * 6}h2v1h-1v1h-1z`} fill="#bbb" />
              ))}
            </svg>
          </div>

          <div className="flex w-[918px] shrink-0 flex-col">
            <div className="flex h-[21px] items-center justify-between pl-[2px] pr-[2px] pt-[2px]">
              <div className="flex">
                <TabBtn><MiniCam k="back" /></TabBtn>
                <TabBtn><MiniCam k="fwd" c="gray" /></TabBtn>
                <TabBtn><MiniCam k="list" /></TabBtn>
                <TabBtn><MiniCam k="zoom" /></TabBtn>
              </div>
              <div className="flex">
                <TabBtn><WinIcon d="M.6.600h8.800v8.800H.600zM5 1v8" /></TabBtn>
                <TabBtn><WinIcon d="M.6.600h8.800v8.800H.600zM1 5h8" /></TabBtn>
                <TabBtn><WinIcon d="M.6.600h8.800v8.800H.600zM1 1.600h8" /></TabBtn>
                <TabBtn><WinIcon d="M1 1l8 8M9 1L1 9" /></TabBtn>
              </div>
            </div>
            <div className="border-2 border-b-0 border-[#0000ff]"><RenderView /></div>
          </div>
        </div>
      </div>
    </div>
  );
}
